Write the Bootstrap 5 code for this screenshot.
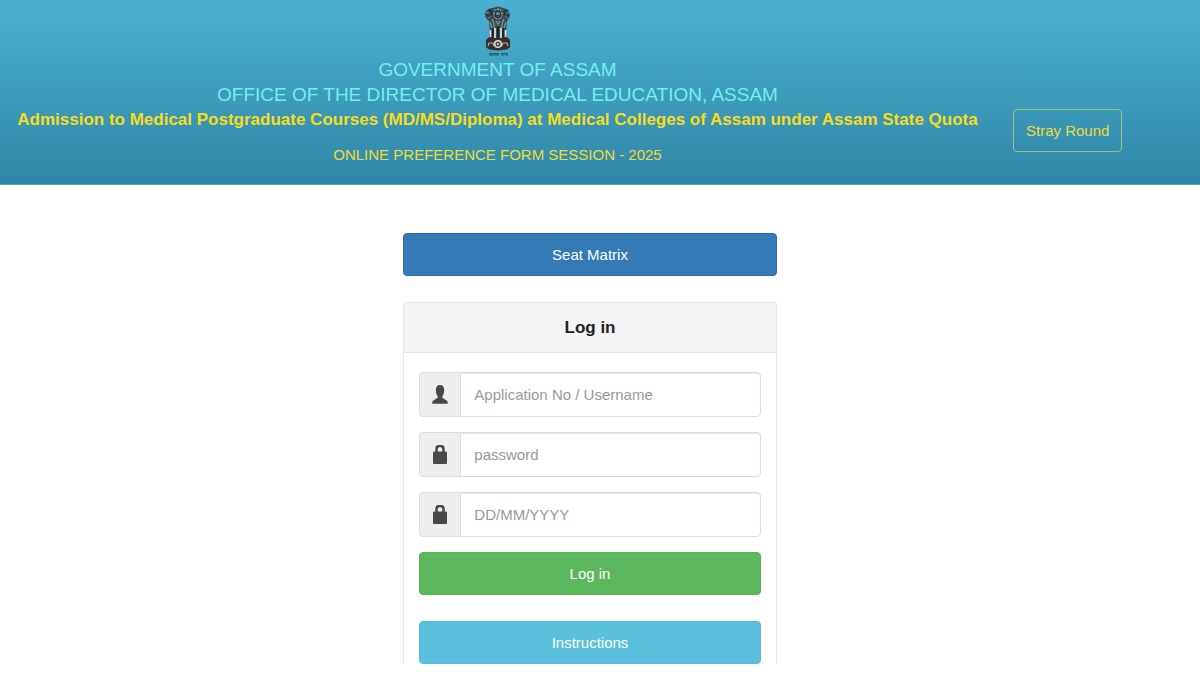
<!DOCTYPE html>
<html lang="en">
<head>
<meta charset="utf-8">
<meta name="viewport" content="width=device-width, initial-scale=1">
<title>Online Preference Form - Medical Education, Assam</title>
<link href="https://cdn.jsdelivr.net/npm/bootstrap@5.3.0/dist/css/bootstrap.min.css" rel="stylesheet">
<style>
  body { font-family: "Liberation Sans", Arial, sans-serif; font-size: 15px; color: #333; background: #fff; }
  .site-header { background: linear-gradient(#4bb0d3, #2f87a7); padding: 6px 0 16px; border-bottom: 1px solid #5b9fb8; }
  .heading-col { padding: 0 20px 0 15px; }
  .emblem { width: 28px; height: 51px; }
  .dept { font-size: 19px; line-height: 25px; color: #74efec; }
  .course { font-size: 17px; line-height: 26px; color: #f8dc20; }
  .session { font-size: 15px; line-height: 26px; margin-top: 9px; color: #efdc36; }
  .round-col { padding: 103px 0 0 13px; }
  .btn { --bs-btn-font-size: 15px; --bs-btn-line-height: 21px; --bs-btn-padding-y: 10px; --bs-btn-border-radius: 4px; }
  .btn-round { --bs-btn-color: #efdc36; --bs-btn-border-color: #a4c070; --bs-btn-hover-color: #fff; --bs-btn-hover-border-color: #efdc36; }
  .btn-matrix { --bs-btn-color: #fff; --bs-btn-bg: #337ab7; --bs-btn-border-color: #2e6da4; --bs-btn-hover-color: #fff; --bs-btn-hover-bg: #286090; }
  .btn-login { --bs-btn-color: #fff; --bs-btn-bg: #5cb85c; --bs-btn-border-color: #57b257; --bs-btn-hover-color: #fff; --bs-btn-hover-bg: #449d44; }
  .btn-help { --bs-btn-color: #fff; --bs-btn-bg: #5bc0de; --bs-btn-border-color: #55b9d7; --bs-btn-hover-color: #fff; --bs-btn-hover-bg: #31b0d5; }
  .page-body { padding: 48px 20px 0 0; }
  .login-col { padding: 0 10px; }
  .login-card { margin-top: 26px; border: 1px solid #e6e6e6; border-bottom: 0; border-radius: 4px 4px 0 0; }
  .login-card .card-header { background: #f4f4f4; border-color: #e2e2e2; padding: 12px 15px; }
  .login-title { font-size: 17px; line-height: 25px; color: #222; }
  .login-card .card-body { padding: 19px 15px 0; }
  .input-group { margin-bottom: 15px; }
  .input-group-text { width: 42px; padding: 0; background: #eee; border: 1px solid #dcdcdc; color: #484848; border-radius: 4px; }
  .form-control { height: 45px; padding: 10px 13px; font-size: 15px; line-height: 23px; border: 1px solid #dcdcdc; border-radius: 4px; box-shadow: inset 0 1px 1px #e6e6e6; }
  .form-control::placeholder { color: #999; }
  .btn-help { margin-top: 26px; }
</style>
</head>
<body>
<header class="site-header">
  <div class="row g-0">
    <div class="col-10 heading-col text-center">
      <svg class="emblem d-block mx-auto" viewBox="0 0 28 51" role="img" aria-label="State Emblem of India">
        <path d="M9 2Q14-1 19 2L23 3Q28 7 25 12L23 15 22 28 24 33H4L6 28 5 15Q0 12 1 7Q3 2 9 2Z" fill="#3a4d54"/>
        <path d="M9 5Q14 0 19 5L18 11Q14 16 10 11Z" fill="#7c9098"/>
        <path d="M9 5L12 6 11 10 14 12 17 10 16 6 19 5M12 4L14 6 16 4M12 9L14 10 16 9M4 5Q7 3 8 7L6 11 3 9M24 5Q21 3 20 7L22 11 25 9" fill="none" stroke="#1d2d34" stroke-width="1.200"/>
        <path d="M2 7L5 6M26 7L23 6M4 12L7 10M24 12L21 10" stroke="#7c9098" stroke-width="1"/>
        <path d="M8 13Q11 18 10 24M20 13Q17 18 18 24M12 15L14 18 16 15M14 19V24M6 16L8 22M22 16L20 22" fill="none" stroke="#84989f" stroke-width="1.200"/>
        <path d="M6.500 24V31M11 22V32M17 22V32M21.500 24V31" fill="none" stroke="#d5dddd" stroke-width="1.800"/>
        <path d="M8.800 22V32M14 20V32M19.200 22V32" stroke="#1b262b" stroke-width="2"/>
        <path d="M4 32H24L26 34V41Q25 44 14 44.500Q3 44 2 41V34Z" fill="#352f2d"/>
        <path d="M4 40L5 37H9L10 40M18 40L19 37H23L24 40" fill="none" stroke="#b5aaa3" stroke-width="1.200"/>
        <circle cx="14" cy="38" r="3.300" fill="#4c4541" stroke="#e0dad4" stroke-width="1.500"/>
        <circle cx="14" cy="38" r="1" fill="#e0dad4"/>
        <path d="M5 47.500H15M17 47.500H24" stroke="#254550" stroke-width=".8"/>
        <path d="M6 48V50M8 48V50M10 48V49.500M12 48V50M14 48V50M18 48V50M20 48V49.500M23 48V50" stroke="#254550" stroke-width="1"/>
      </svg>
      <div class="dept">GOVERNMENT OF ASSAM</div>
      <div class="dept">OFFICE OF THE DIRECTOR OF MEDICAL EDUCATION, ASSAM</div>
      <div class="course fw-bold">Admission to Medical Postgraduate Courses (MD/MS/Diploma) at Medical Colleges of Assam under Assam State Quota</div>
      <div class="session">ONLINE PREFERENCE FORM SESSION - 2025</div>
    </div>
    <div class="col-2 round-col"><button type="button" class="btn btn-round">Stray Round</button></div>
  </div>
</header>
<main class="container-fluid page-body">
  <div class="row g-0">
    <div class="col-4 offset-4 login-col">
      <button type="button" class="btn btn-matrix w-100">Seat Matrix</button>
      <section class="card login-card">
        <div class="card-header text-center"><h1 class="login-title fw-bold mb-0">Log in</h1></div>
        <form class="card-body">
          <div class="input-group">
            <label class="input-group-text justify-content-center" for="username" aria-label="Username">
              <svg width="16" height="19" viewBox="0 0 16 19" fill="currentColor" aria-hidden="true"><path d="M8 0C5.100 0 3.800 2 3.800 5 3.800 8 4.600 9.800 5.600 11V12.800C4.500 14 1.500 14.800.6 16.300L0 18.800H16L15.400 16.300C14.500 14.800 11.500 14 10.400 12.800V11C11.400 9.800 12.200 8 12.200 5 12.200 2 10.900 0 8 0Z"/></svg>
            </label>
            <input type="text" class="form-control" id="username" placeholder="Application No / Username">
          </div>
          <div class="input-group">
            <label class="input-group-text justify-content-center" for="password" aria-label="Password">
              <svg width="14" height="19" viewBox="0 0 14 19" fill="currentColor" aria-hidden="true"><path fill-rule="evenodd" d="M2.300 6.500V3.500Q2.300 0 5.500 0H8.500Q11.700 0 11.700 3.500V6.500H13Q14 6.500 14 7.500V18Q14 19 13 19H1Q0 19 0 18V7.500Q0 6.500 1 6.500ZM4.800 6.500H9.200V4Q9.200 2.200 7.500 2.200H6.500Q4.800 2.200 4.800 4Z"/></svg>
            </label>
            <input type="password" class="form-control" id="password" placeholder="password">
          </div>
          <div class="input-group">
            <label class="input-group-text justify-content-center" for="birthdate" aria-label="Date of birth">
              <svg width="14" height="19" viewBox="0 0 14 19" fill="currentColor" aria-hidden="true"><path fill-rule="evenodd" d="M2.300 6.500V3.500Q2.300 0 5.500 0H8.500Q11.700 0 11.700 3.500V6.500H13Q14 6.500 14 7.500V18Q14 19 13 19H1Q0 19 0 18V7.500Q0 6.500 1 6.500ZM4.800 6.500H9.200V4Q9.200 2.200 7.500 2.200H6.500Q4.800 2.200 4.800 4Z"/></svg>
            </label>
            <input type="text" class="form-control" id="birthdate" placeholder="DD/MM/YYYY">
          </div>
          <button type="submit" class="btn btn-login w-100">Log in</button>
          <button type="button" class="btn btn-help w-100">Instructions</button>
        </form>
      </section>
    </div>
  </div>
</main>
<script src="https://cdn.jsdelivr.net/npm/bootstrap@5.3.0/dist/js/bootstrap.bundle.min.js"></script>
</body>
</html>
